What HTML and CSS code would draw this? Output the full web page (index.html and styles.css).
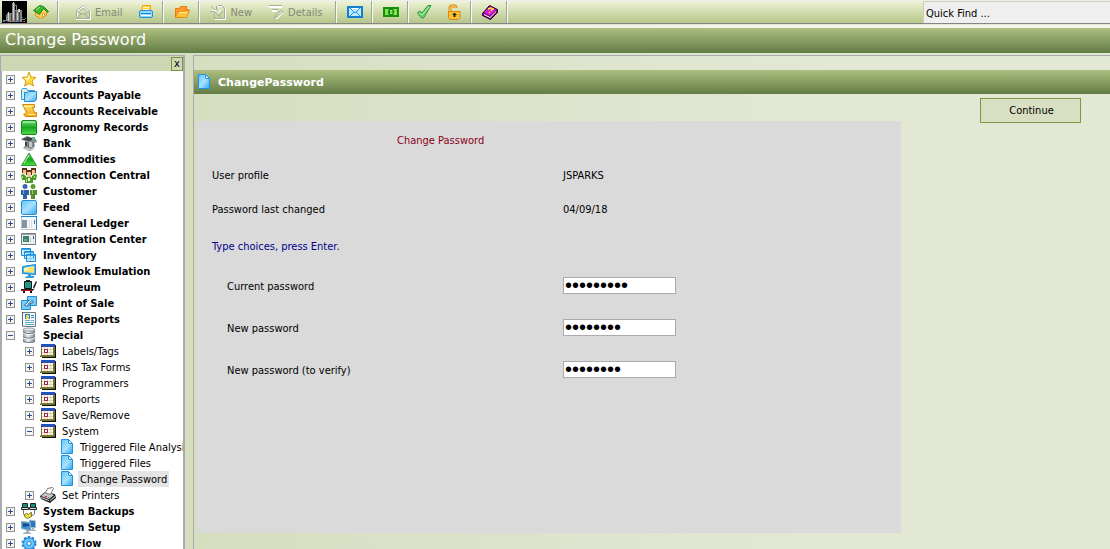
FILE: index.html
```html
<!DOCTYPE html>
<html lang="en">
<head>
    <meta charset="UTF-8">
    <meta name="viewport" content="width=device-width, initial-scale=1.0">
    <title>Change Password</title>
    <link rel="stylesheet" href="styles.css">
</head>
<body>
    <!-- Icon set -->
    <svg class="icon-defs" aria-hidden="true">
        <defs>
            <linearGradient id="g-blue" x1="0" y1="0" x2="1" y2="1"><stop offset="0" stop-color="#5cc4fa"/><stop offset="0.5" stop-color="#a8e2ff"/><stop offset="1" stop-color="#35a6ef"/></linearGradient>
            <linearGradient id="g-green" x1="0" y1="0" x2="0" y2="1"><stop offset="0" stop-color="#7be07b"/><stop offset="0.5" stop-color="#18a51f"/><stop offset="1" stop-color="#4fe04a"/></linearGradient>
            <linearGradient id="g-gold" x1="0" y1="0" x2="0" y2="1"><stop offset="0" stop-color="#ffe36a"/><stop offset="1" stop-color="#f9a51a"/></linearGradient>
            <linearGradient id="g-steel" x1="0" y1="0" x2="1" y2="0"><stop offset="0" stop-color="#8b959c"/><stop offset="0.4" stop-color="#eef2f4"/><stop offset="1" stop-color="#77838b"/></linearGradient>
        </defs>
        <symbol id="i-elevator" viewBox="0 0 25 22">
            <path fill="#000" d="M0 0h25v22H0z"/>
            <path fill="#858585" d="M10 2h3v19h-3zM5 12h5v9H5zM13 9h7v12h-7z"/>
            <path fill="#d0d0d0" d="M11 1h1v18h-1zM6 11h1v9H6zM16 8h2v3h-2zM15 12h1v7h-1z"/>
            <path stroke="#444" d="M9.500 13v7M17.500 11v9M13.500 10v10"/>
            <path fill="#888" d="M12 4h3v1h-3zM14 5h1v4h-1zM4 14h1v5H4zM1 19h4v1H1zM20 18h3v1h-3z"/>
            <path fill="#385cff" d="M1 20h2v1H1zM20 16h1v1h-1zM16 20h2v1h-2z"/>
            <path fill="#d22" d="M5 20h2v1H5zM21 20h2v1h-2zM13 18h1v1h-1z"/>
            <path fill="#3b5" d="M9 20h1v1H9zM19 20h1v1h-1zM23 17h1v1h-1z"/>
        </symbol>
        <symbol id="i-home" viewBox="0 0 16 16">
            <path fill="#ffd257" stroke="#e0930e" d="M2.500 7.500v4l5 3 6-3v-4l-3-4z"/>
            <path fill="#42b52f" stroke="#198519" d="M.5 6.500l6-5 4 1 5 5-1 1-4-4-4 6z"/>
            <path fill="#fff" stroke="#e0a030" d="M9.500 9.500h2v3h-2z"/>
            <path stroke="#94e47b" d="M3 6l4-3"/>
        </symbol>
        <symbol id="i-email" viewBox="0 0 16 16">
            <path fill="none" stroke="#fff" stroke-width="2" d="M2 7l7-5 6 5v8H2z"/>
            <path fill="none" stroke="#a7aa9c" d="M1.500 6.500l7-5 6 5v8h-13zM2 14l4-4M14 14l-4-4M2 7l4 3h4l4-3M4.500 6.500l4-2 3 2"/>
        </symbol>
        <symbol id="i-printer" viewBox="0 0 16 16">
            <path fill="#ffd34a" stroke="#f0a010" d="M4.500 1.500h8v6h-9z"/>
            <path stroke="#fff5b8" d="M5 3.500h6M5 5.500h6"/>
            <rect x="1.500" y="6.500" width="13" height="7" rx="1.500" fill="#8fd9ff" stroke="#2390dc"/>
            <path stroke="#1f86d4" d="M3 9.500h10"/>
            <path stroke="#fff" d="M3 11.500h10"/>
        </symbol>
        <symbol id="i-folder" viewBox="0 0 16 16">
            <path fill="#ff9a2b" stroke="#e87b0c" d="M1.500 13.500v-9h4l1-2h6v3h2l-3 8z"/>
            <path fill="#ffc53d" stroke="#f18a0e" d="M1.500 13.500l3-6 11-1-3 7z"/>
            <path stroke="#fff0a0" d="M5 8.500h8"/>
        </symbol>
        <symbol id="i-new" viewBox="0 0 16 16">
            <path fill="none" stroke="#fff" d="M5.500 2.500h7l3 3v10h-11M4.500 5.500l2 3M1.500 6.500h4M10.500 5.500l-2 4"/>
            <path fill="none" stroke="#a7aa9c" d="M8 1.500h4l2.500 3v10h-10v-3M1 2l4 4M.5 7.500h4M6.500 2v4M3 11l3-3M9 12l4-5M6 9l4 4"/>
        </symbol>
        <symbol id="i-details" viewBox="0 0 16 16">
            <path fill="none" stroke="#fff" stroke-width="2" d="M1 3h13M4 7h5M8 15l7-7"/>
            <path fill="none" stroke="#a7aa9c" d="M1 1.500h13M4 5.500h6M6.500 14l1-3 6-5 1.500 2-6 5z"/>
        </symbol>
        <symbol id="i-mail" viewBox="0 0 16 16">
            <rect x="1" y="3" width="14" height="10" fill="#bdeaff" stroke="#1180d2" stroke-width="2"/>
            <path fill="none" stroke="#2698df" d="M3 4l5 5 5-5M3 12l4-4M13 12L9 8"/>
            <path stroke="#fff" d="M5 4.500h6"/>
        </symbol>
        <symbol id="i-money" viewBox="0 0 16 16">
            <rect x="1" y="4" width="14" height="8" fill="#7fe04a" stroke="#16910d" stroke-width="2"/>
            <ellipse cx="8" cy="8" rx="3" ry="3.500" fill="#0d8a12"/>
            <path fill="none" stroke="#baf77e" d="M9.500 6.500h-2v1.500h1.500v1.500h-2M3 6.500h1M12 9.500h1"/>
        </symbol>
        <symbol id="i-check" viewBox="0 0 16 16">
            <path fill="#68d169" stroke="#259442" d="M1.500 9l2-2 2.500 2 6-7.500h3L7.500 14h-2z"/>
            <path stroke="#b9f5ad" d="M3 9l3 2 7-8" fill="none"/>
        </symbol>
        <symbol id="i-lock" viewBox="0 0 16 16">
            <path fill="none" stroke="#de8610" stroke-width="3" d="M4 8V4c0-3 6-3 6 0"/>
            <path fill="none" stroke="#ffe381" d="M4 8V4c0-3 6-3 6 0"/>
            <path fill="#ffc02f" stroke="#df860b" d="M2.500 7.500h11.500v6l-2 2h-8l-1.500-2z"/>
            <path fill="#222" d="M7.500 9h2v1h1v1h-1v2h-2v-2h-1v-1h1z"/>
        </symbol>
        <symbol id="i-book" viewBox="0 0 16 16">
            <path fill="#7c0a83" stroke="#1a001c" d="M.5 9.500l7-8 8 4v3l-7 7-8-4z"/>
            <path fill="#e417dc" d="M2 8.500l6-6 6 3-6 6z"/>
            <path fill="#fff" d="M2 11l6 3 6-6v-1l-6 6-6-3z"/>
            <path fill="none" stroke="#ffe62b" stroke-width="1.500" d="M6 5l3-1 2 1-2 2M7 8l1 1"/>
        </symbol>
        <symbol id="i-star" viewBox="0 0 16 16">
            <path fill="#ffdc3e" stroke="#dc9b16" d="M8 1l2 5 5 .5-4 3.500 1.500 5L8 12.500 3.500 15 5 10 1 6.500 6 6z"/>
            <path fill="#fff6ae" d="M8 3l1 4-3 3-3-3h3z"/>
        </symbol>
        <symbol id="i-folders" viewBox="0 0 16 16">
            <path fill="#d5f1ff" stroke="#2f9ddd" d="M.5 12.500v-10l1-1h4l1 2h7v9z"/>
            <path fill="#ffdf84" d="M2 4h10v2H2z"/>
            <path fill="url(#g-blue)" stroke="#208cd8" d="M3.500 14.500v-9h3l1-1h8v8l-2 2z"/>
        </symbol>
        <symbol id="i-scroll" viewBox="0 0 16 16">
            <path fill="url(#g-gold)" stroke="#d08a0d" d="M1.500 1.500h12v3h-2l2 5h2v4h-11l-2-2 3-2z"/>
            <path fill="none" stroke="#fff2a0" d="M3 3.500h7M7 11.500h7"/>
        </symbol>
        <symbol id="i-green" viewBox="0 0 16 16">
            <rect x=".5" y="1.500" width="15" height="14" rx="1.500" fill="url(#g-green)" stroke="#16871d"/>
            <path stroke="#baf7b3" d="M2 3h12"/>
        </symbol>
        <symbol id="i-bank" viewBox="0 0 16 16">
            <path fill="#858a8c" d="M0 4l6-3 9 3 1 3-3 1 1 3-3 4-3 1-6-3 3-3-1-4-3-1z"/>
            <path fill="#3e4446" d="M1 4l6-2 7 2-6 2zM4 7h2v4H4z"/>
            <path fill="#c3c7c9" d="M8 7h3v5H8zM4 12l6 2 4-3-1 3-3 2-6-2z"/>
            <path fill="#5fb08e" d="M11 2h3v3h-3z"/>
            <path stroke="#686e70" d="M12.500 7v4M7.500 8v4"/>
        </symbol>
        <symbol id="i-triangle" viewBox="0 0 16 16">
            <path fill="url(#g-green)" stroke="#2c9b32" d="M8 2l7.500 12.500H.5z"/>
            <path stroke="#c5f6c0" d="M8 4L3 12" fill="none"/>
        </symbol>
        <symbol id="i-people" viewBox="0 0 16 16">
            <path fill="#5a3018" d="M1 1h5v5H1zM10 1h5v5h-5zM5 3h6v5H5z"/>
            <path fill="#f5c591" d="M2 3h3v4H2zM11 3h3v4h-3zM6 5h4v5H6z"/>
            <path fill="#4b9c22" d="M0 8l2-1 3 2v4H1zM11 9l3-2 2 1-1 5h-4zM4 12l2-2h4l2 2v4H4z"/>
            <path fill="#fff" d="M7 11h2v3H7z"/>
            <path stroke="#b6ec71" d="M1.500 9v2M13.500 9v2M5.500 12v3"/>
        </symbol>
        <symbol id="i-customer" viewBox="0 0 16 16">
            <circle cx="4" cy="3.500" r="2.500" fill="#3567a8"/>
            <path fill="#2c5fa4" d="M0 7h8v5H6v4H2v-4H0z"/>
            <circle cx="12" cy="3.500" r="2.500" fill="#609c37"/>
            <path fill="#568e2c" d="M9 7h7v5h-2v4h-4v-4H9z"/>
            <path stroke="#80a7d8" d="M2.500 7v4"/>
            <path stroke="#9acb6d" d="M11.500 7v4"/>
        </symbol>
        <symbol id="i-blue" viewBox="0 0 16 16">
            <rect x=".5" y="1.500" width="15" height="14" rx="1.500" fill="url(#g-blue)" stroke="#268fdd"/>
        </symbol>
        <symbol id="i-ledger" viewBox="0 0 16 16">
            <path fill="#f5f7f8" stroke="#b8c2ca" d="M.5 1.500h15v13H.5z"/>
            <path fill="#1f87d2" d="M0 1h16v1H0zM15 2h1v13h-1z"/>
            <path fill="#8794a0" d="M1 5h5v8H1z"/>
            <path stroke="#dde2e6" d="M8.500 5v8M10.500 5v8"/>
            <path stroke="#517798" d="M13.500 5v4"/>
        </symbol>
        <symbol id="i-integration" viewBox="0 0 16 16">
            <path fill="#ecefef" stroke="#777c80" d="M.5 2.500h14v11H.5z"/>
            <path fill="#9ba1a4" d="M1 3h13v1H1z"/>
            <path fill="#417c72" d="M2 5h6v6H2z"/>
            <path fill="#69b36c" d="M3 8h3v2H3z"/>
            <path stroke="#c3c9cf" d="M9.500 6v5"/>
            <path stroke="#345d81" d="M12.500 5v3"/>
        </symbol>
        <symbol id="i-windows" viewBox="0 0 16 16">
            <path fill="#c4ebff" stroke="#198bd8" d="M.5 1.500h9v7h-9zM3.500 4.500h9v7h-9zM5.500 7.500h9v7h-9z"/>
            <path stroke="#3ba9ef" d="M1 2.500h8M4 5.500h8M6 8.500h8"/>
            <path stroke="#8acdf1" d="M6 11.500h8M9.500 9v5"/>
        </symbol>
        <symbol id="i-monitor" viewBox="0 0 16 16">
            <path fill="#4eb8f2" stroke="#188ad6" d="M1.500 3.500l13-2v10l-13-1z"/>
            <path fill="#ffe36d" d="M3 5l10-2v7L3 9z"/>
            <path fill="#fff6b6" d="M3 5l7-1-7 5z"/>
            <path fill="#2e9ee0" d="M7 11h3v2h3v2H4v-1l3-1z"/>
        </symbol>
        <symbol id="i-petroleum" viewBox="0 0 16 16">
            <path fill="#23968c" stroke="#111" d="M3.500 2.500h7v7h-7z"/>
            <path fill="#222" d="M5 1h4v1H5zM0 10h13v1H0zM12 8l3-6 1 1-3 7z"/>
            <path fill="#c41420" d="M0 11h12v1H0z"/>
            <path fill="#111" d="M2 12h2v2H2zM9 12h2v2H9z"/>
        </symbol>
        <symbol id="i-pos" viewBox="0 0 16 16">
            <path fill="#7cccf8" stroke="#1e8dd7" d="M6.500 1.500h9v9h-9zM.5 5.500h9v9h-9z"/>
            <path fill="#8fbcd8" stroke="#3c789e" d="M3.500 10l2-2 1 1 4-4 2 2-2 2-1-1-4 4z"/>
            <path stroke="#e8f7ff" d="M5 10l5-5"/>
        </symbol>
        <symbol id="i-reports" viewBox="0 0 16 16">
            <path fill="#f5f8fa" stroke="#6f7a82" d="M1.500 1.500h13v14h-13z"/>
            <path stroke="#4a4f53" stroke-dasharray="1 1" d="M1.500 1v14"/>
            <path fill="#198bd3" d="M4 3h5v5H4zM10 4h3v1h-3zM10 6h3v1h-3z"/>
            <path fill="#f9cd54" d="M5 4h3v4H5z"/>
            <path stroke="#62a9d4" d="M4 9.500h5M10 9.500h3M4 11.500h9M4 13.500h9"/>
        </symbol>
        <symbol id="i-database" viewBox="0 0 16 16">
            <path fill="url(#g-steel)" d="M2 2h12v13l-3 1H5l-3-1z"/>
            <ellipse cx="8" cy="2.500" rx="6" ry="1.500" fill="#dfe5e8" stroke="#98a2a9"/>
            <path fill="none" stroke="#fff" d="M2 6c3 2 9 2 12 0M2 10.500c3 2 9 2 12 0"/>
            <path fill="none" stroke="#6d7980" d="M2 5c3 2 9 2 12 0M2 9.500c3 2 9 2 12 0M2 14c3 2 9 2 12 0"/>
        </symbol>
        <symbol id="i-calendar" viewBox="0 0 16 16">
            <path fill="#111" d="M2 2h14v13H2z"/>
            <path fill="#77742c" d="M1 1h14v12l-1 1H0v-1l1-1z"/>
            <path fill="#fffdf0" d="M2 4h11v8H2z"/>
            <path fill="#2450b8" d="M1 1h14v3H1z"/>
            <path stroke="#d8d5b0" d="M2 6.500h11M2 9.500h11M4.500 4v8M7.500 4v8M10.500 4v8"/>
            <path fill="#fff" stroke="#98174c" d="M4.500 6.500h3v3h-3z"/>
        </symbol>
        <symbol id="i-page" viewBox="0 0 16 16">
            <path fill="url(#g-blue)" stroke="#2193de" d="M2.500.5h7l4 4v10h-11z"/>
            <path fill="#eefaff" stroke="#2193de" d="M9.500.5v4h4z"/>
        </symbol>
        <symbol id="i-setprinter" viewBox="0 0 16 16">
            <path fill="#222" d="M0 9l5-4 10 2 1 4-6 5-9-4z"/>
            <path fill="#c9c9c9" d="M1 9l5-4 8 3-5 4z"/>
            <path fill="#fff" stroke="#777" d="M5.500 6l2-4.500 5-1 1 1-3 6z"/>
            <path fill="#dcdcdc" d="M1 10l8 3v1l-8-3zM10 13l5-4v1l-5 4z"/>
            <path fill="#d22" d="M5 9h2v1H5z"/>
            <path fill="#2a4" d="M8 10h1v1H8z"/>
        </symbol>
        <symbol id="i-backup" viewBox="0 0 16 16">
            <path fill="#ddd" stroke="#222" d="M1.500.5h5v4h-5zM9.500.5h5v4h-5zM.5 4.500h7v2h-7zM8.500 4.500h7v2h-7z"/>
            <path fill="#138d7e" d="M2 1h4v3H2zM10 1h4v3h-4z"/>
            <path fill="none" stroke="#777" d="M2.500 7v4l2 2M13.500 7v4l-3 2"/>
            <path fill="#f4df39" stroke="#777330" d="M3.500 11.500l2-1 2 1 2-2h1v4l-4 2-3-2z"/>
        </symbol>
        <symbol id="i-setup" viewBox="0 0 16 16">
            <path fill="#2a78bd" stroke="#a8bdcb" d="M8.500 1l6 1v7l-6-1z"/>
            <path fill="#3e94d8" stroke="#87a6ba" d="M.5 2.500l9 1v8l-9-2z"/>
            <path fill="#174f8b" d="M2 4l6 1v2L2 8z"/>
            <path fill="#a8b0b5" d="M5 11h3v2l2 1v1H2v-1l3-1zM11 9h2v2h2v1h-5z"/>
        </symbol>
        <symbol id="i-gear" viewBox="0 0 16 16">
            <circle cx="8" cy="8.500" r="6.500" fill="#61bdf7" stroke="#2485d0" stroke-width="2" stroke-dasharray="2.400 1.700"/>
            <circle cx="8" cy="8.500" r="5.500" fill="#6ac5fa" stroke="#2b90dc"/>
            <circle cx="8" cy="8.500" r="2" fill="#fff" stroke="#2485d0"/>
        </symbol>
    </svg>

    <div class="toolbar">
        <div class="tool-group first">
            <svg class="logo" role="img" aria-label="Company logo"><use href="#i-elevator"/></svg>
            <button class="tool" aria-label="Home"><svg class="icon"><use href="#i-home"/></svg></button>
        </div>
        <div class="tool-group wide">
            <button class="tool" disabled><svg class="icon"><use href="#i-email"/></svg>Email</button>
            <button class="tool" aria-label="Print"><svg class="icon"><use href="#i-printer"/></svg></button>
        </div>
        <div class="tool-group">
            <button class="tool" aria-label="Open"><svg class="icon"><use href="#i-folder"/></svg></button>
        </div>
        <div class="tool-group text">
            <button class="tool" disabled><svg class="icon"><use href="#i-new"/></svg>New</button>
            <button class="tool" disabled><svg class="icon"><use href="#i-details"/></svg>Details</button>
        </div>
        <div class="tool-group">
            <button class="tool" aria-label="Mail"><svg class="icon"><use href="#i-mail"/></svg></button>
        </div>
        <div class="tool-group">
            <button class="tool" aria-label="Payments"><svg class="icon"><use href="#i-money"/></svg></button>
        </div>
        <div class="tool-group pair">
            <button class="tool" aria-label="Accept"><svg class="icon"><use href="#i-check"/></svg></button>
            <button class="tool" aria-label="Unlock"><svg class="icon"><use href="#i-lock"/></svg></button>
        </div>
        <div class="tool-group">
            <button class="tool" aria-label="Help"><svg class="icon"><use href="#i-book"/></svg></button>
        </div>
        <input class="quick-find" type="text" aria-label="Quick Find" value="Quick Find ...">
    </div>

    <h1 class="page-title">Change Password</h1>

    <div class="workspace">
        <nav class="sidebar">
            <div class="sidebar-head"><button class="close">x</button></div>
            <ul class="tree">
                <li><div class="node favorites"><button class="toggle" aria-label="Expand"></button><svg class="icon"><use href="#i-star"/></svg><a href="#">Favorites</a></div></li>
                <li><div class="node"><button class="toggle" aria-label="Expand"></button><svg class="icon"><use href="#i-folders"/></svg><a href="#">Accounts Payable</a></div></li>
                <li><div class="node"><button class="toggle" aria-label="Expand"></button><svg class="icon"><use href="#i-scroll"/></svg><a href="#">Accounts Receivable</a></div></li>
                <li><div class="node"><button class="toggle" aria-label="Expand"></button><svg class="icon"><use href="#i-green"/></svg><a href="#">Agronomy Records</a></div></li>
                <li><div class="node"><button class="toggle" aria-label="Expand"></button><svg class="icon"><use href="#i-bank"/></svg><a href="#">Bank</a></div></li>
                <li><div class="node"><button class="toggle" aria-label="Expand"></button><svg class="icon"><use href="#i-triangle"/></svg><a href="#">Commodities</a></div></li>
                <li><div class="node"><button class="toggle" aria-label="Expand"></button><svg class="icon"><use href="#i-people"/></svg><a href="#">Connection Central</a></div></li>
                <li><div class="node"><button class="toggle" aria-label="Expand"></button><svg class="icon"><use href="#i-customer"/></svg><a href="#">Customer</a></div></li>
                <li><div class="node"><button class="toggle" aria-label="Expand"></button><svg class="icon"><use href="#i-blue"/></svg><a href="#">Feed</a></div></li>
                <li><div class="node"><button class="toggle" aria-label="Expand"></button><svg class="icon"><use href="#i-ledger"/></svg><a href="#">General Ledger</a></div></li>
                <li><div class="node"><button class="toggle" aria-label="Expand"></button><svg class="icon"><use href="#i-integration"/></svg><a href="#">Integration Center</a></div></li>
                <li><div class="node"><button class="toggle" aria-label="Expand"></button><svg class="icon"><use href="#i-windows"/></svg><a href="#">Inventory</a></div></li>
                <li><div class="node"><button class="toggle" aria-label="Expand"></button><svg class="icon"><use href="#i-monitor"/></svg><a href="#">Newlook Emulation</a></div></li>
                <li><div class="node"><button class="toggle" aria-label="Expand"></button><svg class="icon"><use href="#i-petroleum"/></svg><a href="#">Petroleum</a></div></li>
                <li><div class="node"><button class="toggle" aria-label="Expand"></button><svg class="icon"><use href="#i-pos"/></svg><a href="#">Point of Sale</a></div></li>
                <li><div class="node"><button class="toggle" aria-label="Expand"></button><svg class="icon"><use href="#i-reports"/></svg><a href="#">Sales Reports</a></div></li>
                <li>
                    <div class="node"><button class="toggle open" aria-label="Collapse"></button><svg class="icon"><use href="#i-database"/></svg><a href="#">Special</a></div>
                    <ul>
                        <li><div class="node"><button class="toggle" aria-label="Expand"></button><svg class="icon"><use href="#i-calendar"/></svg><a href="#">Labels/Tags</a></div></li>
                        <li><div class="node"><button class="toggle" aria-label="Expand"></button><svg class="icon"><use href="#i-calendar"/></svg><a href="#">IRS Tax Forms</a></div></li>
                        <li><div class="node"><button class="toggle" aria-label="Expand"></button><svg class="icon"><use href="#i-calendar"/></svg><a href="#">Programmers</a></div></li>
                        <li><div class="node"><button class="toggle" aria-label="Expand"></button><svg class="icon"><use href="#i-calendar"/></svg><a href="#">Reports</a></div></li>
                        <li><div class="node"><button class="toggle" aria-label="Expand"></button><svg class="icon"><use href="#i-calendar"/></svg><a href="#">Save/Remove</a></div></li>
                        <li>
                            <div class="node"><button class="toggle open" aria-label="Collapse"></button><svg class="icon"><use href="#i-calendar"/></svg><a href="#">System</a></div>
                            <ul>
                                <li><div class="node leaf"><svg class="icon"><use href="#i-page"/></svg><a href="#">Triggered File Analysis</a></div></li>
                                <li><div class="node leaf"><svg class="icon"><use href="#i-page"/></svg><a href="#">Triggered Files</a></div></li>
                                <li><div class="node leaf"><svg class="icon"><use href="#i-page"/></svg><a href="#" class="selected">Change Password</a></div></li>
                            </ul>
                        </li>
                        <li><div class="node"><button class="toggle" aria-label="Expand"></button><svg class="icon"><use href="#i-setprinter"/></svg><a href="#">Set Printers</a></div></li>
                    </ul>
                </li>
                <li><div class="node"><button class="toggle" aria-label="Expand"></button><svg class="icon"><use href="#i-backup"/></svg><a href="#">System Backups</a></div></li>
                <li><div class="node"><button class="toggle" aria-label="Expand"></button><svg class="icon"><use href="#i-setup"/></svg><a href="#">System Setup</a></div></li>
                <li><div class="node"><button class="toggle" aria-label="Expand"></button><svg class="icon"><use href="#i-gear"/></svg><a href="#">Work Flow</a></div></li>
            </ul>
        </nav>

        <main class="content">
            <h2 class="content-title"><svg class="icon"><use href="#i-page"/></svg>ChangePassword</h2>
            <div class="content-body">
                <form class="panel" id="password-form">
                    <h3>Change Password</h3>
                    <div class="row"><span>User profile</span><span>JSPARKS</span></div>
                    <div class="row"><span>Password last changed</span><span>04/09/18</span></div>
                    <p class="hint">Type choices, press Enter.</p>
                    <div class="row field"><label for="current">Current password</label><input type="password" id="current" value="password1"></div>
                    <div class="row field"><label for="new">New password</label><input type="password" id="new" value="password"></div>
                    <div class="row field"><label for="verify">New password (to verify)</label><input type="password" id="verify" value="password"></div>
                </form>
                <div class="actions">
                    <button class="continue" form="password-form">Continue</button>
                </div>
            </div>
        </main>
    </div>
</body>
</html>
```
FILE: styles.css
```css
* {
    box-sizing: border-box;
}
body {
    margin: 0;
    height: 100vh;
    overflow: hidden;
    display: flex;
    flex-direction: column;
    font-family: "DejaVu Sans Condensed", "Noto Sans", sans-serif;
    font-size: 11px;
    color: #000;
    background: linear-gradient(to right, #d2dbba, #e3e8d5 75%);
}
button, input {
    font: inherit;
    color: inherit;
}
button {
    padding: 0;
    border: none;
    background: none;
}
ul {
    list-style: none;
    margin: 0;
    padding: 0;
}
.icon-defs {
    width: 0;
    height: 0;
    flex: none;
}
.icon {
    width: 16px;
    height: 16px;
    flex: none;
}

/* Toolbar */
.toolbar {
    display: flex;
    flex: none;
    height: 24px;
    background: linear-gradient(#eef3d8, #cbd8a5 60%, #b6c68c);
    border-top: 1px solid #eeeeee;
    border-bottom: 1px solid #858585;
}
.tool-group {
    display: flex;
    align-items: center;
    gap: 16px;
    padding: 0 8px 0 11px;
    border-right: 1px solid #a2a2a2;
    box-shadow: 1px 0 0 #f8faf0;
}
.tool-group.first {
    gap: 6px;
    padding: 0 8px 0 2px;
}
.tool-group.wide {
    padding-left: 17px;
}
.tool-group.text {
    padding-right: 13px;
}
.tool-group.pair {
    gap: 14px;
    padding-left: 8px;
}
.tool {
    display: flex;
    align-items: center;
    gap: 4px;
}
.tool:disabled {
    color: #858877;
}
.logo {
    width: 25px;
    height: 22px;
}
.quick-find {
    width: 187px;
    margin-left: auto;
    padding: 1px 2px 0;
    border: 1px solid #c9d1ae;
    border-width: 1px 0 0 1px;
    background: #efefef;
}

.page-title {
    flex: none;
    margin: 4px 0 2px;
    padding-left: 5px;
    height: 25px;
    line-height: 23px;
    font-family: "DejaVu Sans", sans-serif;
    font-size: 16px;
    font-weight: normal;
    color: #fff;
    background: linear-gradient(#adbf80, #637c45);
    box-shadow: 0 -3px 0 #f3f5ec;
}

/* Two panes */
.workspace {
    display: flex;
    flex: 1;
    gap: 8px;
    min-height: 0;
}
.sidebar {
    width: 185px;
    display: flex;
    flex-direction: column;
    border: 2px solid #a9a9ae;
    border-width: 1px 2px 0 1px;
}
.sidebar-head {
    display: flex;
    justify-content: flex-end;
    flex: none;
    height: 15px;
    padding-top: 1px;
    background: #cdd7b3;
}
.close {
    width: 12px;
    height: 14px;
    line-height: 12px;
    border: 1px solid #7d9141;
}
.tree {
    flex: 1;
    overflow: hidden;
    background: #fff;
    border-left: 1px solid #a9a9ae;
}
.node {
    display: flex;
    align-items: center;
    gap: 6px;
    height: 16px;
    padding-left: 4px;
    white-space: nowrap;
}
.node a {
    height: 16px;
    color: #000;
    font-weight: bold;
    line-height: 17px;
    text-decoration: none;
}
.favorites a {
    padding-left: 3px;
}
.tree ul .node {
    gap: 6px;
    padding-left: 23px;
}
.tree ul .node a {
    font-weight: normal;
}
.tree ul .leaf {
    padding-left: 57px;
    gap: 3px;
}
.leaf a {
    padding: 0 2px;
}
.leaf .selected {
    background: #e4e4e4;
}
.toggle {
    width: 9px;
    height: 9px;
    flex: none;
    border: 1px solid #919191;
    background:
        linear-gradient(#2f4f94, #2f4f94) center / 5px 1px no-repeat,
        linear-gradient(#2f4f94, #2f4f94) center / 1px 5px no-repeat,
        #f3f3f3;
}
.toggle.open {
    background:
        linear-gradient(#2f4f94, #2f4f94) center / 5px 1px no-repeat,
        #f3f3f3;
}

/* Main pane */
.content {
    flex: 1;
    border: 1px solid #a9a9ae;
    border-width: 1px 0 0 1px;
}
.content-title {
    display: flex;
    align-items: center;
    gap: 6px;
    height: 24px;
    margin: 14px 0 0;
    padding-left: 2px;
    font-size: 11px;
    font-family: "DejaVu Sans", sans-serif;
    color: #fff;
    background: linear-gradient(#adbf80, #637c45);
}
.content-body {
    display: flex;
    padding-left: 3px;
}
.panel {
    flex: 0 1 704px;
    min-height: 412px;
    margin-top: 27px;
    padding: 3px 15px;
    background: #dadada;
}
.panel h3 {
    margin: 0;
    padding-left: 185px;
    font-size: 11px;
    font-weight: normal;
    line-height: 34px;
    color: #8b0015;
}
.row {
    display: grid;
    grid-template-columns: 351px 1fr;
    align-items: center;
    height: 34px;
}
.hint {
    margin: 0;
    padding-top: 3px;
    line-height: 35px;
    color: #00008b;
}
.field {
    height: 42px;
}
.field label {
    padding: 2px 0 0 15px;
}
.field input {
    width: 113px;
    height: 17px;
    padding: 0 1px;
    border: 1px solid #ababab;
    background: #fff;
    font-family: "Liberation Sans", sans-serif;
    font-size: 20px;
    line-height: 15px;
}
.actions {
    margin: 4px 0 0 79px;
}
.continue {
    width: 101px;
    height: 25px;
    padding-left: 2px;
    border: 1px solid #84943f;
    background: #d8dfc2;
}
```
